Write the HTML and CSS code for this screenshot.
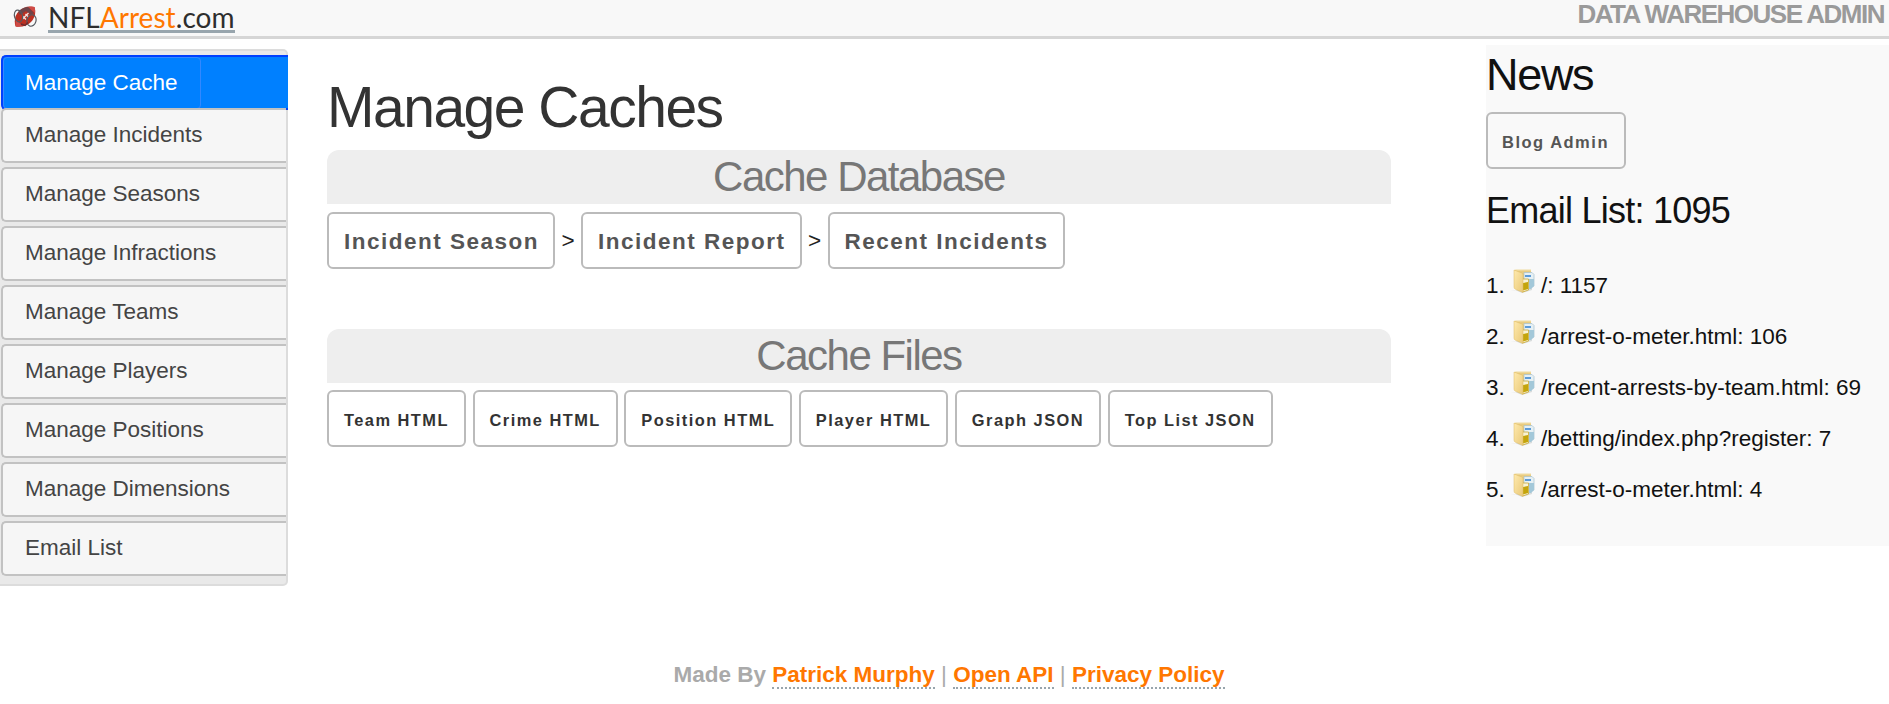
FILE: index.html
```html
<!DOCTYPE html>
<html lang="en">
<head>
<meta charset="utf-8">
<title>NFLArrest.com - Data Warehouse Admin</title>
<link rel="stylesheet" href="styles.css">
</head>
<body>
<svg class="defs" width="0" height="0" aria-hidden="true">
  <defs>
    <linearGradient id="folderFront" x1="0" y1="0" x2="1" y2="1">
      <stop offset="0" stop-color="#ffeaae"/><stop offset="1" stop-color="#e9c877"/>
    </linearGradient>
    <symbol id="folder" viewBox="0 0 24 24">
      <path d="M0 22l4-1 7 3 10-3v-3z" fill="#b9bfc0" opacity=".5"/>
      <path d="M3 1h17v3l-6 1v18h-2z" fill="#e8cb80"/>
      <path d="M4 .5h16v1.200H5z" fill="#f0dba0"/>
      <path d="M13 3.500h8l2 2V17l-2 1h-8z" fill="#e6f0f4" stroke="#a5c0cb" stroke-width=".7"/>
      <path d="M14 6h6v2h-6z" fill="#5c9bd8"/>
      <path d="M18 10h5v7l-3 3h-2z" fill="#a3c8d9"/>
      <path d="M11.500 10h6v11l-6 2z" fill="#f8f2d5" stroke="#c9a832" stroke-width=".8"/>
      <path d="M12 14l5-1v7l-5 1.500z" fill="#c4a50c"/>
      <path d="M3 1l8 3q1 .5 1 2v17.500L4 20q-1-.5-1-2z" fill="url(#folderFront)" stroke="#dfba63" stroke-width=".5"/>
    </symbol>
  </defs>
</svg>

<header class="topbar">
  <a class="brand" href="#">
    <svg class="brand-icon" viewBox="0 0 24 22" aria-hidden="true">
      <path d="M2.500 20.500Q0 11 6 5T21.500 1Q24 10 18 16T2.500 20.500z" fill="#bb3022"/>
      <path d="M3 20.500q-1-3 0-7l6 6q-3 1.500-6 1zM15 1q4-.8 6.500 0 1 3 .5 6z" fill="#cf4a45"/>
      <path d="M5 6q5-5 10-5l6 6-3 2-5-4-6 4z" fill="#5d4a54" opacity=".8"/>
      <path d="M9.500 13l6-6M10 10.500l3 3M12.500 8l3 3" stroke="#f4e3df" stroke-width="1.400" fill="none"/>
      <ellipse cx="5.500" cy="10" rx="4" ry="6" transform="rotate(-15 5.500 10)" fill="none" stroke="#555a60" stroke-width="1.200"/>
      <ellipse cx="18.500" cy="14.500" rx="4.500" ry="5.800" transform="rotate(15 18.500 14.500)" fill="none" stroke="#555a60" stroke-width="1.200"/>
      <path d="M8 18l4 1.500 3-3" stroke="#6e2b2e" stroke-width="1.500" fill="none"/>
    </svg>
    <span class="brand-name">NFL<span class="accent">Arrest</span>.com</span>
  </a>
  <div class="site-title">DATA WAREHOUSE ADMIN</div>
</header>

<div class="page">
  <nav class="sidebar">
    <a class="nav-item active" href="#"><span>Manage Cache</span></a>
    <a class="nav-item" href="#">Manage Incidents</a>
    <a class="nav-item" href="#">Manage Seasons</a>
    <a class="nav-item" href="#">Manage Infractions</a>
    <a class="nav-item" href="#">Manage Teams</a>
    <a class="nav-item" href="#">Manage Players</a>
    <a class="nav-item" href="#">Manage Positions</a>
    <a class="nav-item" href="#">Manage Dimensions</a>
    <a class="nav-item" href="#">Email List</a>
  </nav>

  <main class="content">
    <h1>Manage Caches</h1>
    <section>
      <h2>Cache Database</h2>
      <div class="steps">
        <a class="button large" href="#">Incident Season</a>
        <span class="sep">&gt;</span>
        <a class="button large" href="#">Incident Report</a>
        <span class="sep">&gt;</span>
        <a class="button large" href="#">Recent Incidents</a>
      </div>
    </section>
    <section>
      <h2>Cache Files</h2>
      <div class="files">
        <a class="button dark" href="#">Team HTML</a>
        <a class="button dark" href="#">Crime HTML</a>
        <a class="button dark" href="#">Position HTML</a>
        <a class="button dark" href="#">Player HTML</a>
        <a class="button dark" href="#">Graph JSON</a>
        <a class="button dark" href="#">Top List JSON</a>
      </div>
    </section>
  </main>

  <aside class="news">
    <h3>News</h3>
    <a class="button blog" href="#">Blog Admin</a>
    <h4>Email List: 1095</h4>
    <div class="hits">
      <div class="hit"><span class="num">1.</span><svg><use href="#folder"/></svg><span>/: 1157</span></div>
      <div class="hit"><span class="num">2.</span><svg><use href="#folder"/></svg><span>/arrest-o-meter.html: 106</span></div>
      <div class="hit"><span class="num">3.</span><svg><use href="#folder"/></svg><span>/recent-arrests-by-team.html: 69</span></div>
      <div class="hit"><span class="num">4.</span><svg><use href="#folder"/></svg><span>/betting/index.php?register: 7</span></div>
      <div class="hit"><span class="num">5.</span><svg><use href="#folder"/></svg><span>/arrest-o-meter.html: 4</span></div>
    </div>
  </aside>
</div>

<footer class="footer">Made By <a href="#">Patrick Murphy</a> <i>|</i> <a href="#">Open API</a> <i>|</i> <a href="#">Privacy Policy</a></footer>
</body>
</html>
```

FILE: styles.css
```css
* { box-sizing: border-box; }

body {
  margin: 0;
  height: 704px;
  overflow: hidden;
  background: #fff;
  color: #222;
  font-family: "Liberation Sans", Arial, sans-serif;
  font-size: 22.5px;
}

a { color: inherit; text-decoration: none; }
h1, h2, h3, h4 { margin: 0; font-weight: 400; }
.defs { display: block; }

.topbar {
  display: flex;
  justify-content: space-between;
  height: 39px;
  background: #f8f8f8;
  border-bottom: 3px solid #d6d6d6;
}
.brand { display: flex; align-items: flex-start; padding-left: 13px; }
.brand-icon { width: 24px; height: 22px; margin: 6px 11px 0 0; }
.brand-name {
  height: 33px;
  border-bottom: 3px solid #98a5ad;
  color: #2e2e2e;
  font: 400 28px/34px Lato, sans-serif;
  letter-spacing: 0.05px;
  white-space: nowrap;
}
.accent { color: #ff7700; }
.site-title {
  padding-right: 5px;
  color: #9a9a9a;
  font-weight: 700;
  font-size: 26px;
  line-height: 28px;
  letter-spacing: -1.5px;
}

.page { display: flex; align-items: flex-start; height: 607px; }

.sidebar {
  display: flex;
  flex-direction: column;
  gap: 4px;
  width: 288px;
  height: 537px;
  margin-top: 10px;
  padding: 4px 0 0 1px;
  background: #e9e9e9;
  border: 2px solid #dcdcdc;
  border-left: 0;
  border-radius: 0 5px 5px 0;
}
.nav-item {
  flex: none;
  height: 55px;
  padding-left: 22px;
  background: #f6f6f6;
  border: 2px solid #c2c2c2;
  border-right: 0;
  border-radius: 5px 0 0 5px;
  color: #444;
  line-height: 50px;
}
.nav-item.active {
  margin: 0 -2px -6px 0;
  padding: 0;
  background: #0080ff;
  border-color: #0040ff;
  color: #fff;
}
.nav-item.active span {
  display: block;
  width: 198px;
  height: 52px;
  padding-left: 21px;
  border: 1px solid #3388ff;
  border-radius: 4px;
  line-height: 49px;
}
.nav-item:nth-child(2) { position: relative; }

.content { width: 1064px; margin-left: 39px; }
h1 {
  height: 111px;
  padding-top: 35px;
  color: #333;
  font-size: 57px;
  line-height: 66px;
  letter-spacing: -1.5px;
}
h2 {
  height: 54px;
  background: #eee;
  border-radius: 12px 12px 0 0;
  color: #777;
  font-size: 42px;
  line-height: 54px;
  letter-spacing: -1.5px;
  text-align: center;
}
.button {
  display: block;
  height: 57px;
  padding: 0 15px;
  border: 2px solid #bbb;
  border-radius: 6px;
  color: #555;
  font-weight: 700;
  font-size: 16.5px;
  line-height: 57px;
  letter-spacing: 1.5px;
  white-space: nowrap;
}
.button.large { padding: 0 14px 0 15px; font-size: 22.5px; line-height: 55px; }
.button.dark { padding: 0 15px; color: #333; font-size: 16.4px; letter-spacing: 1.48px; }
.steps { display: flex; height: 125px; padding-top: 8px; }
.sep { width: 26px; line-height: 57px; text-align: center; }
.files { display: flex; gap: 6.500px; padding-top: 7px; }

.news {
  width: 403px;
  height: 501px;
  margin: 6px 0 0 95px;
  background: #f9f9f9;
  color: #111;
}
h3 { height: 67px; font-size: 45px; line-height: 60px; letter-spacing: -1.3px; }
.blog { width: 140px; padding: 0 14px; }
h4 { padding-top: 20px; font-size: 36px; line-height: 44px; letter-spacing: -.75px; }
.hits { padding-top: 25px; }
.hit { display: flex; height: 51px; line-height: 55px; white-space: nowrap; }
.num { width: 25px; }
.hit svg { width: 24px; height: 24px; margin: 11px 6px 0 0; }

.footer {
  padding-left: 9px;
  color: #aaa;
  font-weight: 700;
  line-height: 57px;
  text-align: center;
}
.footer a { color: #ff7700; border-bottom: 2px dotted #98a5ad; }
.footer i { font-style: normal; font-weight: 400; }
```
